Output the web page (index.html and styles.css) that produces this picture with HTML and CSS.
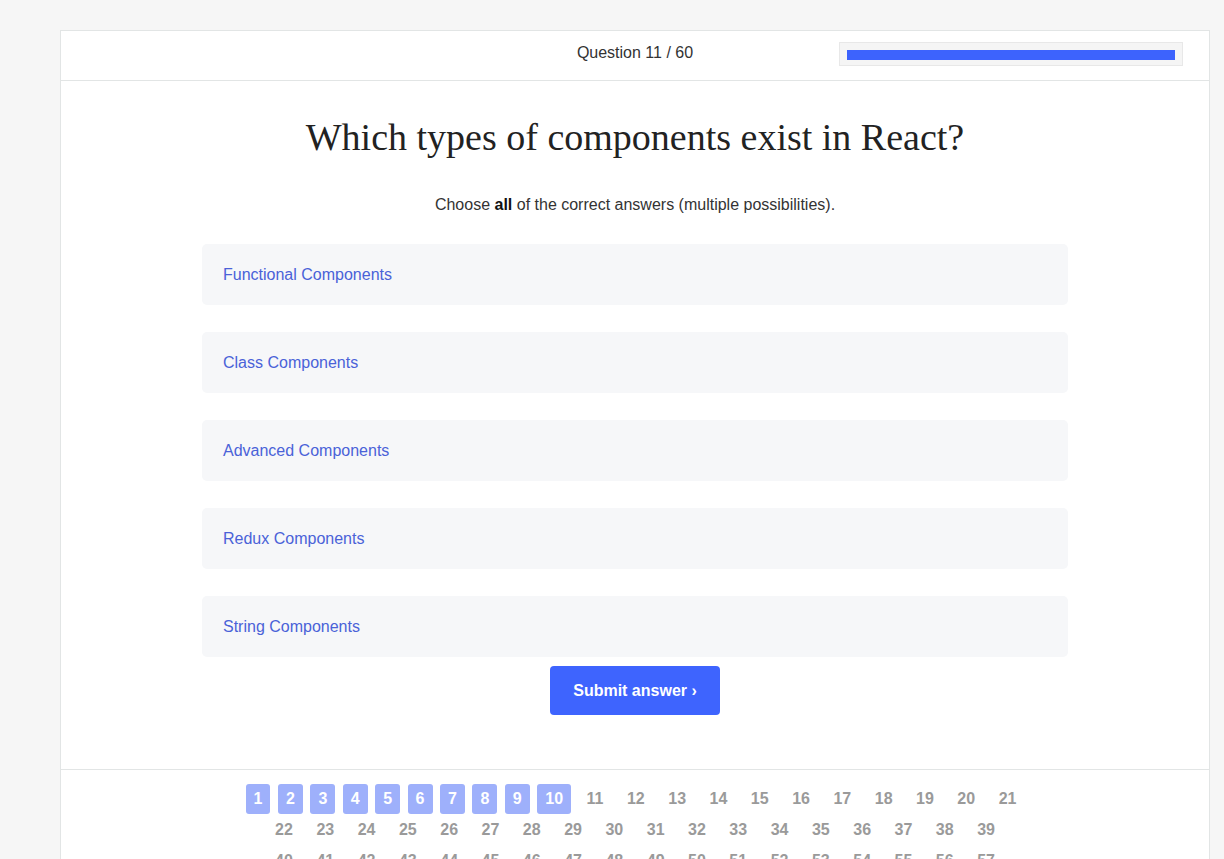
FILE: index.html
```html
<!DOCTYPE html>
<html lang="en">
<head>
<meta charset="utf-8">
<title>Quiz</title>
<link rel="stylesheet" href="styles.css">
</head>
<body>
<div class="card">
  <header class="quiz-header">
    <div class="spacer"></div>
    <div class="counter">Question 11 / 60</div>
    <div class="progress-wrap">
      <div class="progress"><div class="progress-bar" style="width:100%"></div></div>
    </div>
  </header>
  <main class="quiz-main">
    <h1 class="question">Which types of components exist in React?</h1>
    <p class="hint">Choose <b>all</b> of the correct answers (multiple possibilities).</p>
    <div class="options">
      <div class="option">Functional Components</div>
      <div class="option">Class Components</div>
      <div class="option">Advanced Components</div>
      <div class="option">Redux Components</div>
      <div class="option">String Components</div>
    </div>
    <button class="submit">Submit answer ›</button>
  </main>
  <footer class="pager">
    <div class="pager-row">
      <span class="pg done">1</span><span class="pg done">2</span><span class="pg done">3</span><span class="pg done">4</span><span class="pg done">5</span><span class="pg done">6</span><span class="pg done">7</span><span class="pg done">8</span><span class="pg done">9</span><span class="pg done">10</span><span class="pg">11</span><span class="pg">12</span><span class="pg">13</span><span class="pg">14</span><span class="pg">15</span><span class="pg">16</span><span class="pg">17</span><span class="pg">18</span><span class="pg">19</span><span class="pg">20</span><span class="pg">21</span>
    </div>
    <div class="pager-row">
      <span class="pg">22</span><span class="pg">23</span><span class="pg">24</span><span class="pg">25</span><span class="pg">26</span><span class="pg">27</span><span class="pg">28</span><span class="pg">29</span><span class="pg">30</span><span class="pg">31</span><span class="pg">32</span><span class="pg">33</span><span class="pg">34</span><span class="pg">35</span><span class="pg">36</span><span class="pg">37</span><span class="pg">38</span><span class="pg">39</span>
    </div>
    <div class="pager-row">
      <span class="pg">40</span><span class="pg">41</span><span class="pg">42</span><span class="pg">43</span><span class="pg">44</span><span class="pg">45</span><span class="pg">46</span><span class="pg">47</span><span class="pg">48</span><span class="pg">49</span><span class="pg">50</span><span class="pg">51</span><span class="pg">52</span><span class="pg">53</span><span class="pg">54</span><span class="pg">55</span><span class="pg">56</span><span class="pg">57</span>
    </div>
    <div class="pager-row">
      <span class="pg">58</span><span class="pg">59</span><span class="pg">60</span>
    </div>
  </footer>
</div>
</body>
</html>
```
FILE: styles.css
```css
html {
  overflow: hidden;
}
body {
  margin: 0;
  background: #f6f6f6;
  font-family: "Liberation Sans", Arial, sans-serif;
  color: #333;
}
.card {
  box-sizing: border-box;
  width: 1150px;
  margin: 30px 0 0 60px;
  background: #fff;
  border: 1px solid #e2e5e5;
}
.quiz-header {
  height: 49px;
  border-bottom: 1px solid #e2e5e5;
  display: grid;
  grid-template-columns: 1fr auto 1fr;
  align-items: center;
}
.counter {
  font-size: 16px;
  color: #333;
  padding-bottom: 5px;
}
.progress-wrap {
  display: flex;
  justify-content: flex-end;
  padding-right: 26px;
  padding-bottom: 4px;
}
.progress {
  box-sizing: border-box;
  width: 344px;
  height: 24px;
  padding: 7px;
  background: #f5f5f5;
  border: 1px solid #e8e8e8;
}
.progress-bar {
  height: 10px;
  background: #3d63fd;
}
.quiz-main {
  width: 866px;
  margin: 0 auto;
  padding: 35px 0 54px;
  display: flex;
  flex-direction: column;
  align-items: center;
}
.question {
  margin: 0;
  font-family: "Liberation Serif", "Times New Roman", serif;
  font-weight: normal;
  font-size: 38px;
  line-height: 42px;
  color: #222;
}
.hint {
  margin: 38px 0 0;
  font-size: 16px;
  line-height: 18px;
  color: #333;
}
.hint b {
  color: #111;
}
.options {
  align-self: stretch;
  margin-top: 30px;
  display: flex;
  flex-direction: column;
  gap: 27px;
}
.option {
  height: 61px;
  display: flex;
  align-items: center;
  padding: 0 21px;
  background: #f6f7f9;
  border-radius: 5px;
  font-size: 16px;
  color: #4a62d8;
}
.submit {
  margin-top: 9px;
  height: 49px;
  padding: 0 23px;
  border: none;
  border-radius: 4px;
  background: #3e64fe;
  color: #fff;
  font-family: "Liberation Sans", Arial, sans-serif;
  font-weight: bold;
  font-size: 16px;
}
.pager {
  border-top: 1px solid #e2e5e5;
  padding: 14px 0 20px;
  display: flex;
  flex-direction: column;
  gap: 1px;
}
.pager-row {
  display: flex;
  justify-content: center;
  gap: 7.5px;
}
.pg {
  height: 30px;
  line-height: 30px;
  padding: 0 8px;
  border-radius: 3px;
  font-weight: bold;
  font-size: 16px;
  color: #9a9a9a;
}
.pg.done {
  background: #9eb0fb;
  color: #fff;
}
```
